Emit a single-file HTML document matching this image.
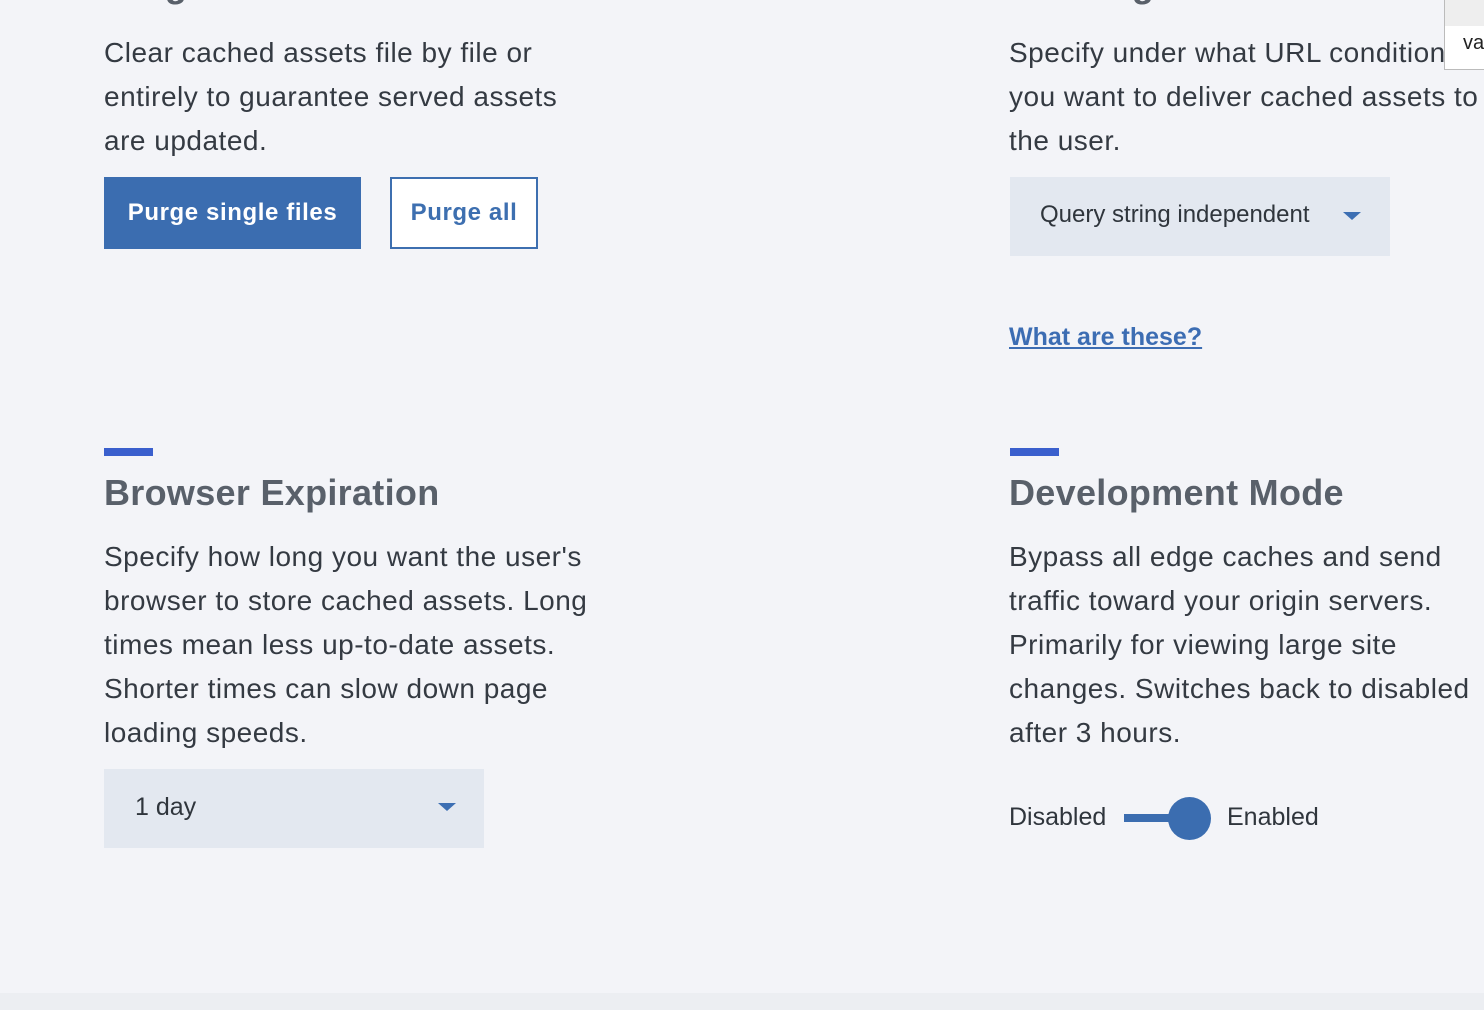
<!DOCTYPE html>
<html><head><style>
html,body{margin:0;padding:0;}
body{width:1484px;height:1010px;background:#f3f4f8;position:relative;overflow:hidden;font-family:"Liberation Sans",sans-serif;color:#343a42;}
.a{position:absolute;white-space:nowrap;}
.p{font-size:28px;line-height:44px;letter-spacing:0.5px;}
.h{font-size:36px;font-weight:bold;color:#59606a;letter-spacing:0.3px;}
.bar{position:absolute;width:49px;height:8px;background:#3a5fcd;}
.sel{position:absolute;background:#e3e8f0;}
.tri{position:absolute;width:0;height:0;border-left:9px solid transparent;border-right:9px solid transparent;border-top:8px solid #3d6fb3;}
</style></head><body>
<div class="a h" style="left:104px;top:-36px;">Purge Cache</div>
<div class="a h" style="left:1010px;top:-36px;">Caching Level</div>

<div class="a p" style="left:104px;top:31px;">Clear cached assets file by file or<br>entirely to guarantee served assets<br>are updated.</div>
<div class="a" style="left:104px;top:177px;width:257px;height:72px;background:#3b6db0;color:#fff;font-size:24px;font-weight:bold;line-height:72px;text-align:center;letter-spacing:0.6px;">Purge single files</div>
<div class="a" style="left:390px;top:177px;width:144px;height:68px;border:2px solid #3d6fb0;background:#fff;color:#3d6fb0;font-size:24px;font-weight:bold;line-height:68px;text-align:center;letter-spacing:0.6px;">Purge all</div>

<div class="a p" style="left:1009px;top:31px;">Specify under what URL conditions<br>you want to deliver cached assets to<br>the user.</div>
<div class="sel" style="left:1010px;top:177px;width:380px;height:79px;"></div>
<div class="a" style="left:1040px;top:201px;font-size:24px;color:#2f353c;width:276px;overflow:hidden;">Query string independent</div>
<div class="tri" style="left:1343px;top:212px;"></div>
<div class="a" style="left:1009px;top:323px;font-size:25px;font-weight:bold;color:#3c6db3;text-decoration:underline;">What are these?</div>

<div class="bar" style="left:104px;top:448px;"></div>
<div class="bar" style="left:1010px;top:448px;"></div>
<div class="a h" style="left:104px;top:472px;">Browser Expiration</div>
<div class="a h" style="left:1009px;top:472px;">Development Mode</div>

<div class="a p" style="left:104px;top:535px;">Specify how long you want the user's<br>browser to store cached assets. Long<br>times mean less up-to-date assets.<br>Shorter times can slow down page<br>loading speeds.</div>
<div class="sel" style="left:104px;top:769px;width:380px;height:79px;"></div>
<div class="a" style="left:135px;top:793px;font-size:25px;color:#2f353c;">1 day</div>
<div class="tri" style="left:438px;top:803px;"></div>

<div class="a p" style="left:1009px;top:535px;">Bypass all edge caches and send<br>traffic toward your origin servers.<br>Primarily for viewing large site<br>changes. Switches back to disabled<br>after 3 hours.</div>
<div class="a" style="left:1009px;top:803px;font-size:25px;color:#2f353c;">Disabled</div>
<div class="a" style="left:1124px;top:814px;width:66px;height:8px;background:#3b6db0;"></div>
<div class="a" style="left:1168px;top:797px;width:43px;height:43px;border-radius:50%;background:#3b6db0;"></div>
<div class="a" style="left:1227px;top:803px;font-size:25px;color:#2f353c;">Enabled</div>

<div class="a" style="left:1444px;top:0;width:40px;height:70px;background:#fff;border-left:1px solid #bbb;border-bottom:1px solid #bbb;box-sizing:border-box;"></div>
<div class="a" style="left:1445px;top:0;width:39px;height:26px;background:#eeeeee;"></div>
<div class="a" style="left:1463px;top:32px;font-size:20px;color:#222;">va</div>
<div class="a" style="left:0;top:993px;width:1484px;height:17px;background:#eceef2;"></div>
</body></html>
